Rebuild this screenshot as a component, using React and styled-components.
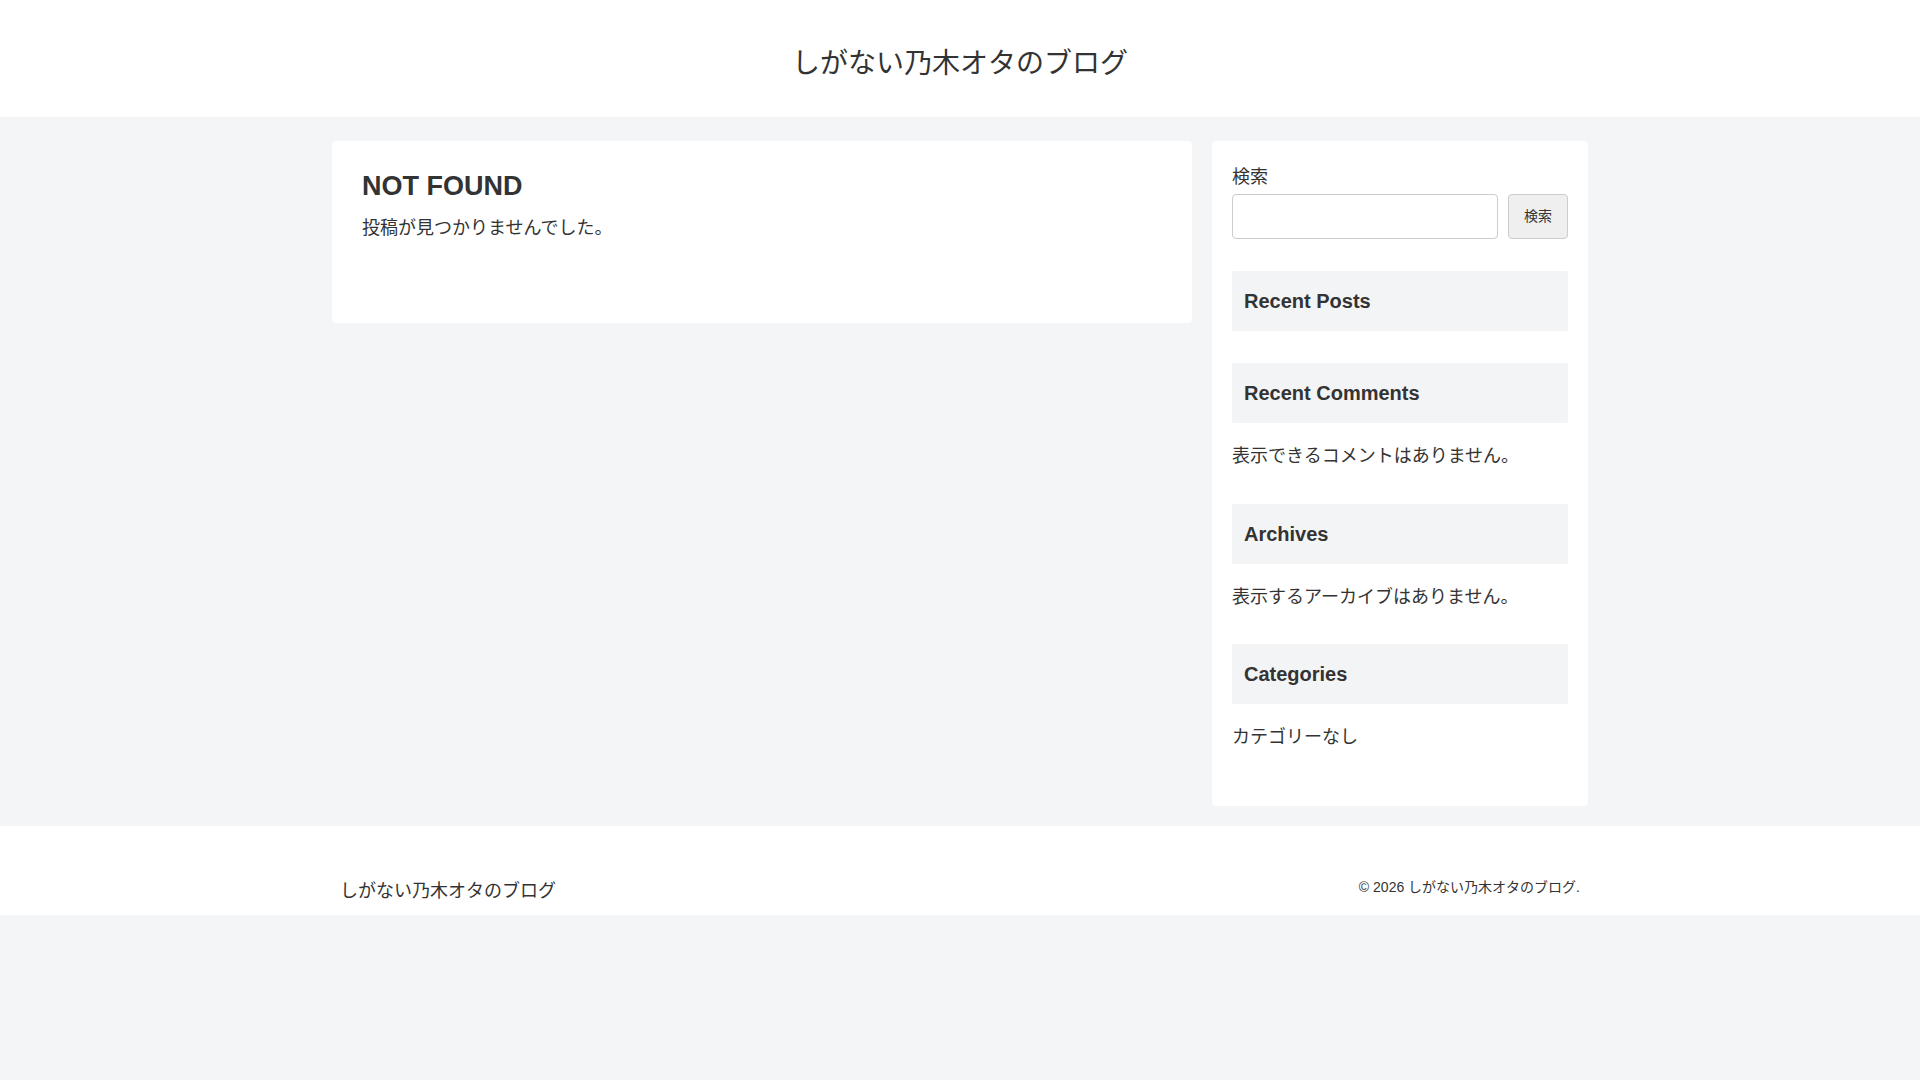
import React from 'react';
import styled, { createGlobalStyle } from 'styled-components';

const GlobalStyle = createGlobalStyle`
    * {
        box-sizing: border-box;
    }
    html, body {
        margin: 0;
        padding: 0;
    }
    body {
        background: #f4f5f7;
        color: #333;
        font-family: "Liberation Sans", "Noto Sans CJK JP", sans-serif;
        font-size: 18px;
        line-height: 1.8;
        min-height: 1080px;
    }
`;

const Header = styled.header`
    background: #fff;
    height: 117px;
    padding-top: 47px;
    text-align: center;
`;

const SiteName = styled.a`
    font-size: 28px;
    line-height: 34px;
    color: #333;
    text-decoration: none;
`;

const Content = styled.div`
    width: 1256px;
    margin: 24px auto 20px;
    display: flex;
    gap: 20px;
    align-items: flex-start;
`;

const Main = styled.main`
    width: 860px;
    background: #fff;
    border-radius: 4px;
    padding: 30px 30px 29px;
    min-height: 182px;
`;

const Title = styled.h1`
    margin: 0 0 11px;
    font-size: 27px;
    line-height: 30px;
    font-weight: bold;
`;

const Text = styled.p`
    margin: 0;
`;

const Sidebar = styled.aside`
    width: 376px;
    background: #fff;
    border-radius: 4px;
    padding: 20px 20px 21px;
`;

const Widget = styled.div`
    margin-bottom: ${(p) => (p.$tight ? '31px' : '32px')};
`;

const Label = styled.label`
    display: block;
    margin-bottom: 1px;
`;

const SearchRow = styled.div`
    display: flex;
    gap: 10px;
`;

const Input = styled.input`
    flex: 1;
    height: 45px;
    border: 1px solid #ccc;
    border-radius: 4px;
    background: #fff;
    padding: 0 10px;
    font-size: 16px;
`;

const Button = styled.button`
    width: 60px;
    height: 45px;
    border: 1px solid #ccc;
    border-radius: 4px;
    background: #efefef;
    color: #333;
    font-family: "Liberation Sans", "Noto Sans CJK JP", sans-serif;
    font-size: 14px;
    line-height: 1;
    padding: 0 0 2px;
    cursor: pointer;
`;

const WidgetTitle = styled.h3`
    margin: 0 0 ${(p) => (p.$empty ? '0' : '17px')};
    background: #f3f4f5;
    border-radius: 2px;
    padding: 12px;
    font-size: 20px;
    line-height: 36px;
    font-weight: bold;
`;

const Footer = styled.footer`
    background: #fff;
    height: 89px;
    padding-top: 49px;
`;

const FooterInner = styled.div`
    width: 1256px;
    margin: 0 auto;
    padding: 0 8px;
    display: flex;
    justify-content: space-between;
    align-items: flex-start;
`;

const FooterName = styled.a`
    color: #333;
    text-decoration: none;
    font-size: 18px;
    line-height: 32px;
`;

const Copyright = styled.div`
    font-size: 14px;
    line-height: 25px;
`;

const widgets = [
    { title: 'Recent Posts', body: null },
    { title: 'Recent Comments', body: '表示できるコメントはありません。' },
    { title: 'Archives', body: '表示するアーカイブはありません。' },
    { title: 'Categories', body: 'カテゴリーなし' },
];

const App = () => {
    return (
        <>
            <GlobalStyle />
            <Header>
                <SiteName href="#">しがない乃木オタのブログ</SiteName>
            </Header>
            <Content>
                <Main>
                    <Title>NOT FOUND</Title>
                    <Text>投稿が見つかりませんでした。</Text>
                </Main>
                <Sidebar>
                    <Widget>
                        <Label htmlFor="s">検索</Label>
                        <SearchRow>
                            <Input id="s" type="search" />
                            <Button type="submit">検索</Button>
                        </SearchRow>
                    </Widget>
                    {widgets.map((w) => (
                        <Widget key={w.title} $tight={!!w.body}>
                            <WidgetTitle $empty={!w.body}>{w.title}</WidgetTitle>
                            {w.body && <Text>{w.body}</Text>}
                        </Widget>
                    ))}
                </Sidebar>
            </Content>
            <Footer>
                <FooterInner>
                    <FooterName href="#">しがない乃木オタのブログ</FooterName>
                    <Copyright>© 2026 しがない乃木オタのブログ.</Copyright>
                </FooterInner>
            </Footer>
        </>
    );
};

export default App;
